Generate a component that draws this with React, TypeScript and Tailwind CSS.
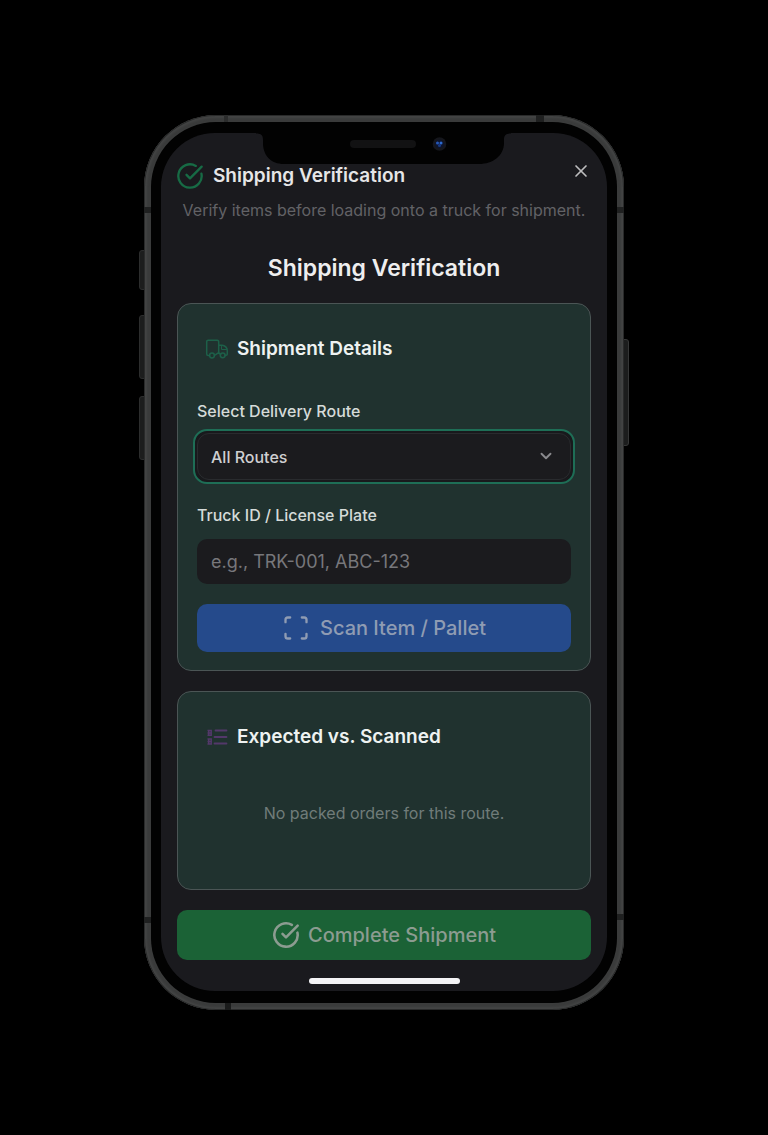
import { ChevronDown, CircleCheckBig, Scan, X } from "lucide-react";
import { useState } from "react";
import type { ReactNode } from "react";

function TruckIcon() {
  return (
    <svg
      viewBox="0 0 24 24"
      className="h-6 w-6 shrink-0 text-[#1d6049]"
      fill="none"
      stroke="currentColor"
      strokeWidth="1.5"
      strokeLinecap="round"
      strokeLinejoin="round"
      aria-hidden="true"
    >
      <path d="M4.500 18.500H3.200A1.500 1.500 0 0 1 1.700 17V4.700A1.500 1.500 0 0 1 3.200 3.200H12.200A1.500 1.500 0 0 1 13.700 4.700V16" />
      <path d="M13.700 8.200H17A5.500 5.500 0 0 1 22.300 13.700V17A1.300 1.300 0 0 1 21 18.300H20" />
      <path d="M9.500 18.300 13.700 15.700 15.500 17.500" />
      <path d="M16.500 9.500V12.500H21.500" strokeWidth="1" />
      <circle cx="7" cy="18.500" r="2.400" />
      <circle cx="17.700" cy="18.300" r="2.400" />
    </svg>
  );
}

function ListIcon() {
  return (
    <svg
      viewBox="0 0 24 24"
      className="h-6 w-6 shrink-0 text-[#53386a]"
      fill="none"
      stroke="currentColor"
      aria-hidden="true"
    >
      <path strokeWidth="1.8" strokeLinecap="round" d="M10.500 5.500H21.500M9.500 12H21.500M9.500 18.500H21.500" />
      <path strokeWidth="1.5" d="M2.500 5.500H6.200V10.200H2.500M3.700 5V10.500M2.500 8H6.500" />
      <path strokeWidth="1.500" d="M2.500 14H6.200V19H2.500M3.700 13.500V19.500M2.500 16.500H6.500" />
    </svg>
  );
}

function PhoneButtons() {
  return (
    <div aria-hidden="true">
      <span className="absolute top-[135px] -left-[5px] h-10 w-[6px] rounded-l-[3px] border border-[#2c2d2d] bg-[#1c1d1d]" />
      <span className="absolute top-[200px] -left-[5px] h-16 w-[6px] rounded-l-[3px] border border-[#2c2d2d] bg-[#1c1d1d]" />
      <span className="absolute top-[281px] -left-[5px] h-16 w-[6px] rounded-l-[3px] border border-[#2c2d2d] bg-[#1c1d1d]" />
      <span className="absolute top-[224px] -right-[5px] h-[107px] w-[6px] rounded-r-[3px] border border-[#353636] bg-[#1c1d1d]" />
    </div>
  );
}

function AntennaBands() {
  return (
    <div aria-hidden="true">
      <span className="absolute top-0 right-[80px] h-[7px] w-2 bg-[#1f2020]" />
      <span className="absolute top-0 left-[80px] h-[7px] w-1 bg-[#2c2d2d]" />
      <span className="absolute top-[92px] left-0 h-[6px] w-[7px] bg-[#1f2020]" />
      <span className="absolute top-[92px] right-0 h-[6px] w-[7px] bg-[#1f2020]" />
      <span className="absolute bottom-[87px] left-0 h-[6px] w-[7px] bg-[#1f2020]" />
      <span className="absolute bottom-[90px] right-0 h-[6px] w-[7px] bg-[#1f2020]" />
      <span className="absolute bottom-0 left-[81px] h-[7px] w-[6px] bg-[#1a1b1b]" />
    </div>
  );
}

function Notch() {
  return (
    <div className="absolute top-0 left-1/2 -translate-x-1/2" aria-hidden="true">
      <svg width="256" height="32" viewBox="0 0 256 32" className="block">
        <path
          fill="#020202"
          d="M0 0V0.5C5.5 .5 7 2.500 7 7V10C7 22.500 15 31 28 31H223C237 31 248 22.500 248 10V7C248 2.500 249.500 .5 255 .5V0Z"
        />
        <rect x="94" y="7" width="66" height="8" rx="4" fill="#121213" />
        <circle cx="183.500" cy="11" r="6.800" fill="#15161c" />
        <circle cx="183.500" cy="11" r="4.300" fill="#0d142c" />
        <circle cx="181.500" cy="10" r="1.500" fill="#2557b8" />
        <circle cx="185" cy="10" r="1.500" fill="#2d6ad0" />
        <circle cx="183.500" cy="12.500" r="1.500" fill="#173a86" />
      </svg>
    </div>
  );
}

function Card({ icon, title, children }: { icon: ReactNode; title: string; children: ReactNode }) {
  return (
    <section className="rounded-[14px] border border-[#4b5555] bg-[#20322f] px-[19px] pt-[31px] pb-[18px]">
      <h3 className="flex items-center gap-2 pl-2 text-[19px] leading-7 font-semibold text-[#eef2f1]">
        {icon}
        {title}
      </h3>
      {children}
    </section>
  );
}

export default function App() {
  const [route, setRoute] = useState("all");
  const [truck, setTruck] = useState("");

  return (
    <main className="flex min-h-screen justify-center bg-black px-4 pt-[115px] pb-[125px] font-[Inter,sans-serif]">
      <div className="relative w-full max-w-[480px]">
        <PhoneButtons />
        <div className="relative overflow-hidden rounded-[72px] bg-[#3a3b3b] p-[7px] shadow-[inset_0_0_0_1px_#292a2a,inset_0_0_2px_3px_#434444]">
          <AntennaBands />
          <div className="relative rounded-[65px] bg-[#020202] px-[10px] pt-[11px] pb-3">
            <div className="relative overflow-hidden rounded-[54px] bg-[#1a1a1e]">
              <Notch />
              <div className="flex flex-col px-4 pt-[27px] pb-[7px]">
                <header>
                  <div className="flex items-start justify-between">
                    <h1 className="flex items-center gap-[9px] text-[19px] leading-8 font-semibold text-[#e6e6e7]">
                      <CircleCheckBig size={28} strokeWidth={2} className="-ml-px text-[#176b45]" aria-hidden="true" />
                      Shipping Verification
                    </h1>
                    <button type="button" aria-label="Close" className="pt-px text-[#bdbdbf]">
                      <X size={20} strokeWidth={2} />
                    </button>
                  </div>
                  <p className="mt-[6px] text-center text-base leading-6 text-[#626266]">
                    Verify items before loading onto a truck for shipment.
                  </p>
                </header>

                <h2 className="mt-[30px] mb-[19px] text-center text-[23px] leading-8 font-semibold text-[#eeeeef]">
                  Shipping Verification
                </h2>

                <div className="flex flex-col gap-5">
                  <Card icon={<TruckIcon />} title="Shipment Details">
                    <label htmlFor="route" className="mt-9 block text-base leading-6 font-medium text-[#d5dbd9]">
                      Select Delivery Route
                    </label>
                    <div className="relative -mx-1 mt-[6px] rounded-[14px] border-2 border-[#1e6e56] bg-[#18191c] p-[2px]">
                      <select
                        id="route"
                        value={route}
                        onChange={(e) => setRoute(e.target.value)}
                        className="block h-[47px] w-full appearance-none rounded-xl border border-[#292b2e] bg-[#1b1b1e] px-[13px] text-base font-medium text-[#cfcfd1] outline-none"
                      >
                        <option value="all">All Routes</option>
                      </select>
                      <ChevronDown
                        size={18}
                        strokeWidth={2.5}
                        className="pointer-events-none absolute top-4 right-[18px] text-[#89898d]"
                        aria-hidden="true"
                      />
                    </div>
                    <label htmlFor="truck" className="mt-[19px] block text-base leading-6 font-medium text-[#d5dbd9]">
                      Truck ID / License Plate
                    </label>
                    <input
                      id="truck"
                      type="text"
                      value={truck}
                      onChange={(e) => setTruck(e.target.value)}
                      placeholder="e.g., TRK-001, ABC-123"
                      className="mt-3 block h-[45px] w-full rounded-[10px] bg-[#1b1b1e] px-[14px] text-lg text-[#cfcfd1] outline-none placeholder:text-[#77777b]"
                    />
                    <button
                      type="button"
                      className="mt-5 flex h-12 w-full items-center justify-center gap-[10px] rounded-[10px] bg-[#254a8b] text-xl font-medium text-[#8f9cb3]"
                    >
                      <Scan size={28} strokeWidth={2} aria-hidden="true" />
                      Scan Item / Pallet
                    </button>
                  </Card>

                  <Card icon={<ListIcon />} title="Expected vs. Scanned">
                    <p className="mt-[50px] mb-[46px] text-center text-base leading-6 text-[#707c7a]">
                      No packed orders for this route.
                    </p>
                  </Card>

                  <button
                    type="button"
                    className="flex h-[50px] w-full items-center justify-center gap-2 rounded-[10px] bg-[#1b6236] text-xl font-medium text-[#8c9c91]"
                  >
                    <CircleCheckBig size={28} strokeWidth={2.2} aria-hidden="true" />
                    Complete Shipment
                  </button>
                </div>

                <div className="mt-[18px] h-[6px] w-[151px] self-center rounded-full bg-[#f4f4f6]" />
              </div>
            </div>
          </div>
        </div>
      </div>
    </main>
  );
}
